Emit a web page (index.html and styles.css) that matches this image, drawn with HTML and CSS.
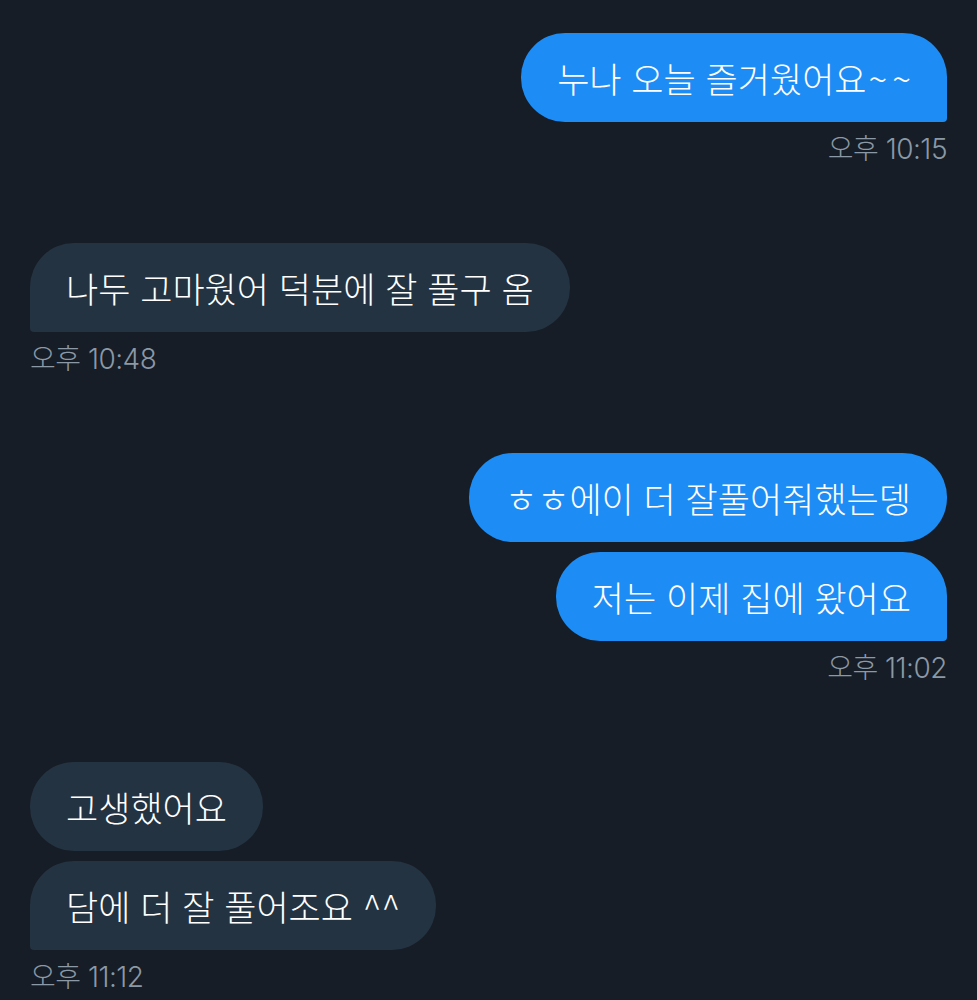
FILE: index.html
```html
<!DOCTYPE html>
<html lang="ko">
<head>
    <meta charset="UTF-8">
    <title>대화</title>
    <link rel="stylesheet" href="styles.css">
</head>
<body>
    <main class="chat">
        <div class="group sent">
            <div class="bubble last">누나 오늘 즐거웠어요<span class="tilde">~~</span></div>
            <div class="time">오후 10:15</div>
        </div>

        <div class="group received">
            <div class="bubble last">나두 고마웠어 덕분에 잘 풀구 옴</div>
            <div class="time">오후 10:48</div>
        </div>

        <div class="group sent">
            <div class="bubble">ㅎㅎ에이 더 잘풀어줘했는뎅</div>
            <div class="bubble last">저는 이제 집에 왔어요</div>
            <div class="time">오후 11:02</div>
        </div>

        <div class="group received">
            <div class="bubble">고생했어요</div>
            <div class="bubble last">담에 더 잘 풀어조요 ^^</div>
            <div class="time">오후 11:12</div>
        </div>
    </main>
</body>
</html>
```

FILE: styles.css
```css
* {
    box-sizing: border-box;
    margin: 0;
    padding: 0;
}

body {
    background-color: #161d26;
    font-family: "Noto Sans CJK KR", "Noto Sans", sans-serif;
    color: #ffffff;
}

.chat {
    display: flex;
    flex-direction: column;
    gap: 78px;
    padding: 33px 30px 0 30px;
}

.group {
    display: flex;
    flex-direction: column;
    gap: 10px;
}

.sent {
    align-items: flex-end;
}

.received {
    align-items: flex-start;
}

.bubble {
    font-size: 35px;
    font-weight: 300;
    line-height: 41px;
    padding: 24px 36px;
    border-radius: 44px;
    white-space: nowrap;
}

/* the original tildes sit wider apart */
.tilde {
    letter-spacing: 5px;
    margin-left: 2px;
    margin-right: -5px;
}

.sent .bubble {
    background-color: #1d8df5;
}

.received .bubble {
    background-color: #243342;
}

.sent .bubble.last {
    border-bottom-right-radius: 4px;
}

.received .bubble.last {
    border-bottom-left-radius: 4px;
}

.time {
    font-family: "Inter", "Noto Sans CJK KR", sans-serif;
    font-size: 28px;
    font-weight: 300;
    line-height: 32px;
    color: #8b98a5;
    margin-top: 1px;
    letter-spacing: -0.5px;
}
```
